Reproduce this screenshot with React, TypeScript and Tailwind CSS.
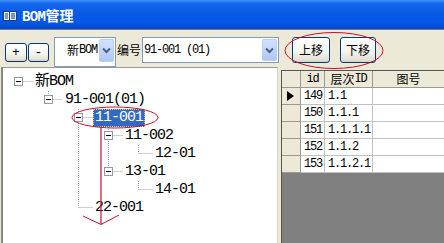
import React from "react";

const MONO = "font-['Liberation_Mono','Noto_Sans_CJK_SC',monospace]";
const CJK = "font-['Noto_Sans_CJK_SC',sans-serif]";

function TitleIcon() {
  return (
    <svg width="14" height="10" viewBox="0 0 14 10">
      <rect x="0.5" y="0.5" width="13" height="9" fill="#E8EEF8" stroke="#1B3A8C" />
      <line x1="6.5" y1="1" x2="6.5" y2="9" stroke="#1B3A8C" />
      <line x1="2" y1="3" x2="5" y2="3" stroke="#1B3A8C" />
      <line x1="2" y1="5" x2="5" y2="5" stroke="#1B3A8C" />
      <line x1="2" y1="7" x2="5" y2="7" stroke="#1B3A8C" />
      <line x1="8" y1="3" x2="12" y2="3" stroke="#1B3A8C" />
      <line x1="8" y1="5" x2="12" y2="5" stroke="#1B3A8C" />
      <line x1="8" y1="7" x2="12" y2="7" stroke="#1B3A8C" />
    </svg>
  );
}

function XPButton({ children, className }: { children: React.ReactNode; className: string }) {
  return (
    <div
      className={
        "flex items-center justify-center rounded-[3px] border border-[#003C74] bg-[linear-gradient(to_bottom,#FFFFFF_0%,#F5F4EF_55%,#E4E1D6_90%,#D6D0C5_100%)] text-black " +
        className
      }
    >
      {children}
    </div>
  );
}

function DropArrow({ className }: { className: string }) {
  return (
    <div
      className={
        "flex items-center justify-center rounded-[2px] border border-[#BACEF6] bg-[linear-gradient(to_bottom,#D4E1FC_0%,#BFD2F8_60%,#AEC6F5_100%)] " +
        className
      }
    >
      <svg width="9" height="7" viewBox="0 0 9 7">
        <path d="M1 1.5 L4.5 5 L8 1.5" fill="none" stroke="#4D6185" strokeWidth="2" />
      </svg>
    </div>
  );
}

const treeIndent = ["pl-[11px]", "pl-[41px]", "pl-[71px]", "pl-[101px]", "pl-[131px]"];

const tree = [
  { label: "新BOM", level: 0, box: true },
  { label: "91-001(01)", level: 1, box: true },
  { label: "11-001", level: 2, box: true, selected: true },
  { label: "11-002", level: 3, box: true },
  { label: "12-01", level: 4, box: false },
  { label: "13-01", level: 3, box: true },
  { label: "14-01", level: 4, box: false },
  { label: "22-001", level: 2, box: false },
];

const rows = [
  ["149", "1.1"],
  ["150", "1.1.1"],
  ["151", "1.1.1.1"],
  ["152", "1.1.2"],
  ["153", "1.1.2.1"],
];

function TreeLines() {
  const h: [number, number, number][] = [
    [81.5, 18.5, 33],
    [99.5, 48.5, 63],
    [117.5, 78.5, 93],
    [135.5, 108.5, 123],
    [153.5, 138.5, 153],
    [171.5, 108.5, 123],
    [189.5, 138.5, 153],
    [207.5, 78.5, 93],
  ];
  const v: [number, number, number][] = [
    [48.5, 91, 99.5],
    [78.5, 109, 207.5],
    [108.5, 127, 171.5],
    [138.5, 145, 153.5],
    [138.5, 181, 189.5],
  ];
  return (
    <svg className="absolute left-[-3px] top-[-68px]" width="444" height="243">
      {h.map(([y, x1, x2], i) => (
        <line key={"h" + i} x1={x1} y1={y} x2={x2} y2={y} stroke="#A0A0A0" strokeDasharray="1 1" />
      ))}
      {v.map(([x, y1, y2], i) => (
        <line key={"v" + i} x1={x} y1={y1} x2={x} y2={y2} stroke="#A0A0A0" strokeDasharray="1 1" />
      ))}
    </svg>
  );
}

export default function App() {
  return (
    <div className="relative flex h-[243px] w-[444px] flex-col overflow-hidden bg-[#ECE9D8]">
      {/* Title bar */}
      <div className="flex h-[29px] shrink-0 items-center bg-[linear-gradient(to_bottom,#3F93F8_0%,#1668EE_12%,#075AE8_45%,#0556E4_80%,#0448CE_100%)] pt-[3px]">
        <div className="ml-[3px] flex">
          <TitleIcon />
        </div>
        <span className="ml-[5px] text-[14px] font-bold leading-none text-white">
          <span className={"tracking-[-0.6px] " + MONO}>BOM</span>
          <span className={CJK}>管理</span>
        </span>
      </div>
      <div className="h-[1px] shrink-0 bg-[#7A7A7A]" />

      {/* Toolbar */}
      <div className="flex h-[37px] shrink-0 items-start">
        <XPButton className={"ml-[5px] mt-[13px] h-[19px] w-[22px] text-[13px] " + MONO}>+</XPButton>
        <XPButton className={"ml-[1px] mt-[13px] h-[19px] w-[21px] text-[13px] " + MONO}>-</XPButton>
        <div className="ml-[5px] mt-[7px] flex h-[30px] w-[62px] items-start border border-[#7F9DB9] bg-white">
          <div className="flex h-[24px] flex-1 items-center pl-[12px] text-[12px] text-black">
            <span className={CJK}>新</span>
            <span className={"tracking-[-1.2px] " + MONO}>BOM</span>
          </div>
          <DropArrow className="mr-[1px] mt-[1px] h-[23px] w-[15px]" />
        </div>
        <div className={"mt-[7px] flex h-[26px] items-center pl-[1px] text-[12px] text-black " + CJK}>编号</div>
        <div className="ml-[1px] mt-[7px] flex h-[26px] w-[137px] items-center border border-[#7F9DB9] bg-white">
          <span className={"flex-1 pl-[1px] text-[12px] tracking-[-1.2px] text-black " + MONO}>91-001 (01)</span>
          <DropArrow className="mr-[1px] h-[22px] w-[15px]" />
        </div>
        <XPButton className={"ml-[13px] mt-[7px] h-[26px] w-[38px] text-[12px] " + CJK}>上移</XPButton>
        <XPButton className={"ml-[10px] mt-[7px] h-[26px] w-[36px] text-[12px] " + CJK}>下移</XPButton>
      </div>

      {/* Main area */}
      <div className="flex min-h-0 flex-1">
        {/* Tree */}
        <div className="relative ml-[1px] h-full w-[277px] overflow-hidden border-l-2 border-r border-t border-l-[#8A8A84] border-r-[#D8D5C8] border-t-[#9A9A94] bg-white">
          <TreeLines />
          <div className="relative pt-[5px]">
            {tree.map((n, i) => (
              <div key={i} className={"flex h-[18px] items-start " + treeIndent[n.level]}>
                {n.box ? (
                  <div className="mt-[4px] flex h-[9px] w-[9px] items-center justify-center border border-[#919B9C] bg-white">
                    <div className="h-[1px] w-[5px] bg-black" />
                  </div>
                ) : (
                  <div className="w-[9px]" />
                )}
                <div
                  className={
                    "ml-[10px] h-[18px] border px-[1px] text-[15px] leading-[16px] tracking-[-1px] " +
                    MONO +
                    (n.selected
                      ? " border-dotted border-[#E6C86A] bg-[#316AC5] text-white"
                      : " border-transparent text-black")
                  }
                >
                  {n.label}
                </div>
              </div>
            ))}
          </div>
        </div>

        {/* Grid */}
        <div className="ml-[3px] mt-[3px] flex min-w-0 flex-1 flex-col border-l border-t border-[#555555] bg-[#808080]">
          <div className="flex h-[17px] shrink-0">
            <div className="w-[19px] border-b border-r border-[#9C9A90] bg-[#ECE9D8]" />
            <div className={"flex w-[24px] items-center justify-center border-b border-r border-[#9C9A90] bg-[#ECE9D8] text-[12px] tracking-[-1.2px] text-black " + MONO}>
              id
            </div>
            <div className="flex w-[48px] items-center justify-center border-b border-r border-[#9C9A90] bg-[#ECE9D8] text-[12px] text-black">
              <span className={CJK}>层次</span>
              <span className={"tracking-[-1.2px] " + MONO}>ID</span>
            </div>
            <div className={"flex flex-1 items-center justify-center border-b border-[#9C9A90] bg-[#ECE9D8] text-[12px] text-black " + CJK}>
              图号
            </div>
          </div>
          {rows.map((r, i) => (
            <div key={i} className="flex h-[17px] shrink-0">
              <div className="flex w-[19px] items-center border-b border-r border-[#9C9A90] bg-[#ECE9D8] pl-[5px]">
                {i === 0 && (
                  <svg width="7" height="10" viewBox="0 0 7 10">
                    <path d="M0 0 L7 5 L0 10 Z" fill="#000" />
                  </svg>
                )}
              </div>
              <div className={"flex w-[24px] items-center justify-end border-b border-r border-[#C0C0C0] bg-white pr-[2px] text-[12px] tracking-[-1.2px] text-black " + MONO}>
                {r[0]}
              </div>
              <div className={"flex w-[48px] items-center border-b border-r border-[#C0C0C0] bg-white pl-[3px] text-[12px] tracking-[-1.2px] text-black " + MONO}>
                {r[1]}
              </div>
              <div className="flex-1 border-b border-[#C0C0C0] bg-white" />
            </div>
          ))}
        </div>
      </div>

      {/* Red annotations */}
      <svg className="pointer-events-none absolute left-0 top-0" width="444" height="243">
        <ellipse cx="115" cy="117.5" rx="43" ry="10.5" fill="none" stroke="#C8102E" strokeWidth="1" />
        <line x1="101" y1="128" x2="101" y2="224" stroke="#C8102E" strokeWidth="1.2" />
        <polyline points="83,216 101,224.5 119,215" fill="none" stroke="#C8102E" strokeWidth="1" />
        <ellipse cx="334" cy="50.5" rx="49" ry="18" fill="none" stroke="#C8102E" strokeWidth="1" />
      </svg>
    </div>
  );
}
